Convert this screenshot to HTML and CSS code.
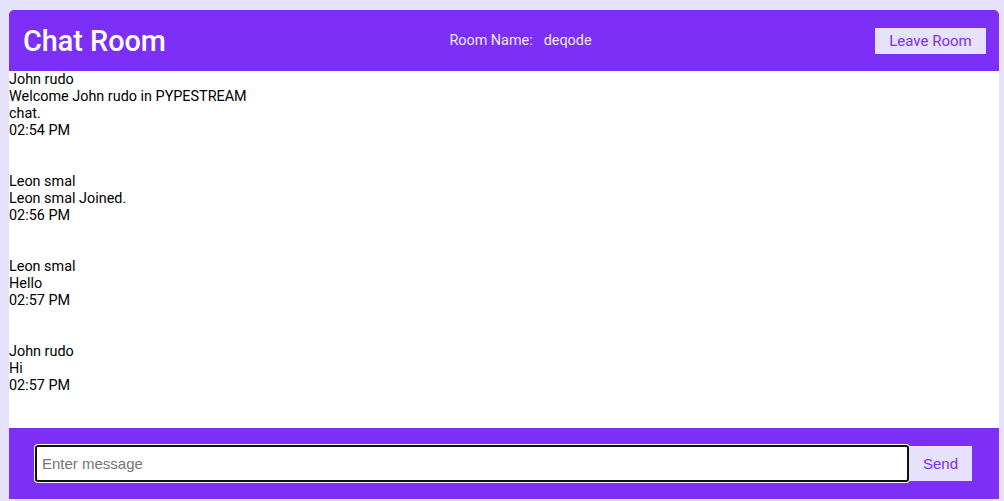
FILE: index.html
```html
<!DOCTYPE html>
<html>
<head>
<meta charset="utf-8">
<link rel="stylesheet" href="styles.css">
</head>
<body>
<div class="chat">
  <header class="chat-header">
    <h1 class="title">Chat Room</h1>
    <div class="room">Room Name:<span class="room-name">deqode</span></div>
    <button class="leave">Leave Room</button>
  </header>
  <main class="messages">
    <div class="msg">
      <div>John rudo</div>
      <div>Welcome John rudo in PYPESTREAM chat.</div>
      <div>02:54 PM</div>
    </div>
    <div class="msg">
      <div>Leon smal</div>
      <div>Leon smal Joined.</div>
      <div>02:56 PM</div>
    </div>
    <div class="msg">
      <div>Leon smal</div>
      <div>Hello</div>
      <div>02:57 PM</div>
    </div>
    <div class="msg">
      <div>John rudo</div>
      <div>Hi</div>
      <div>02:57 PM</div>
    </div>
  </main>
  <footer class="composer">
    <input class="input" type="text" placeholder="Enter message">
    <button class="send">Send</button>
  </footer>
</div>
</body>
</html>
```

FILE: styles.css
```css
html, body {
  margin: 0;
  padding: 0;
  background: #e6e1fc;
  font-family: Roboto, "Liberation Sans", sans-serif;
}
.chat {
  margin: 10px 5px 0 9px;
  height: 489px;
  display: flex;
  flex-direction: column;
}
.chat-header {
  height: 61px;
  flex: none;
  background: #7b2ff7;
  border-radius: 5px 5px 0 0;
  display: flex;
  align-items: center;
  justify-content: space-between;
  padding: 0 13px 0 14px;
  box-sizing: border-box;
}
.title {
  margin: 0;
  color: #fff;
  font-size: 28.8px;
  font-weight: 500;
}
.room {
  color: #ece8fd;
  font-size: 14.4px;
}
.room-name {
  margin-left: 11px;
}
.leave {
  background: #e6e1fc;
  color: #7b2ff7;
  border: none;
  font-family: Roboto, "Liberation Sans", sans-serif;
  font-size: 15px;
  width: 111px;
  height: 26px;
  padding: 0;
  margin-top: 1px;
}
.messages {
  flex: 1;
  background: #fff;
  font-size: 14.4px;
  line-height: 17px;
  color: #000;
}
.msg {
  width: 250px;
  margin-bottom: 34px;
}
.composer {
  height: 71px;
  flex: none;
  background: #7b2ff7;
  display: flex;
  align-items: center;
  padding: 0 27px 0 26px;
  box-sizing: border-box;
}
.input {
  flex: 1;
  height: 37px;
  box-sizing: border-box;
  border: 2px solid #111;
  border-radius: 3px;
  box-shadow: 0 0 0 1px #fff;
  padding: 0 5px;
  font-family: "Liberation Sans", Arial, sans-serif;
  font-size: 15px;
  outline: none;
}
.input::placeholder {
  color: #757575;
}
.send {
  width: 63px;
  height: 35px;
  background: #e6e1fc;
  color: #7b2ff7;
  border: none;
  font-family: "Liberation Sans", Arial, sans-serif;
  font-size: 15px;
  padding: 0;
}
```
